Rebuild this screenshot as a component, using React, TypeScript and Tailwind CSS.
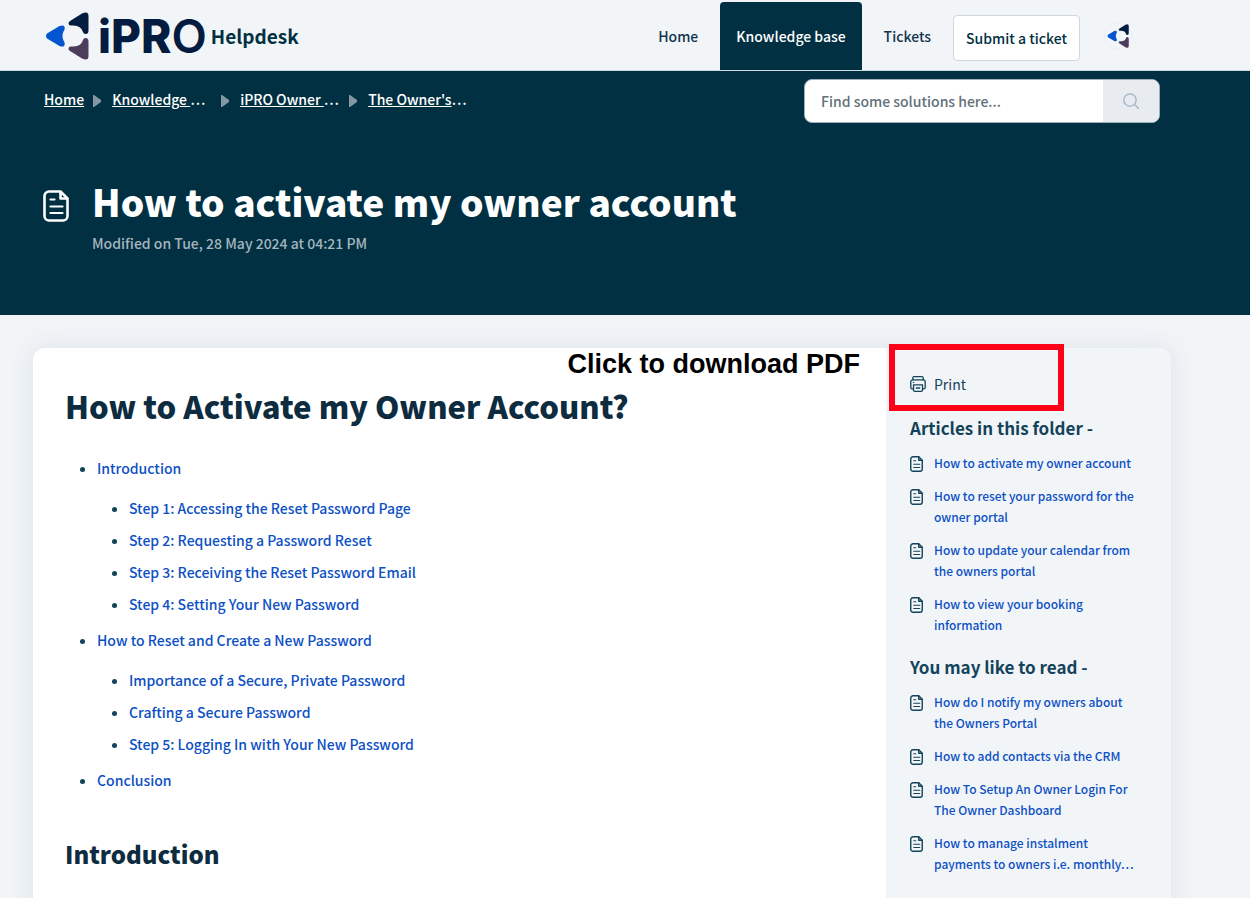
import React from 'react'

type LinkItem = {
    label: string;
    href: string;
};

type TocItem = LinkItem & {
    children?: LinkItem[];
};

const crumbs: LinkItem[] = [
    { label: 'Knowledge ', href: '#solutions' },
    { label: 'iPRO Owner ', href: '#portal' },
    { label: "The Owner's", href: '#dashboard' },
];

const toc: TocItem[] = [
    {
        label: 'Introduction',
        href: '#introduction',
        children: [
            { label: 'Step 1: Accessing the Reset Password Page', href: '#step-1' },
            { label: 'Step 2: Requesting a Password Reset', href: '#step-2' },
            { label: 'Step 3: Receiving the Reset Password Email', href: '#step-3' },
            { label: 'Step 4: Setting Your New Password', href: '#step-4' },
        ],
    },
    {
        label: 'How to Reset and Create a New Password',
        href: '#reset',
        children: [
            { label: 'Importance of a Secure, Private Password', href: '#importance' },
            { label: 'Crafting a Secure Password', href: '#crafting' },
            { label: 'Step 5: Logging In with Your New Password', href: '#step-5' },
        ],
    },
    { label: 'Conclusion', href: '#conclusion' },
];

const folderArticles: LinkItem[] = [
    { label: 'How to activate my owner account', href: '#a1' },
    { label: 'How to reset your password for the owner portal', href: '#a2' },
    { label: 'How to update your calendar from the owners portal', href: '#a3' },
    { label: 'How to view your booking information', href: '#a4' },
];

const relatedArticles: LinkItem[] = [
    { label: 'How do I notify my owners about the Owners Portal', href: '#r1' },
    { label: 'How to add contacts via the CRM', href: '#r2' },
    { label: 'How To Setup An Owner Login For The Owner Dashboard', href: '#r3' },
    { label: 'How to manage instalment payments to owners i.e. monthly…', href: '#r4' },
];

function LogoMark({ className }: { className?: string }) {
    return (
        <svg viewBox="0 0 44 48" className={className} aria-hidden="true">
            <path d="M25 9 37 1.500Q43.500-1.500 43.500 4V18.500Q43.500 22 40.500 22 38.500 22 38 20 36 13.500 28.500 13.500H26Q23.500 13.500 23.500 11.500 23.500 10 25 9Z" fill="#041c3f" />
            <path d="M2 21.500 14.500 14Q20 12 19.700 16.500 19.700 18 18.500 19.500 16.500 24 18.500 28.500 19.700 30 19.700 31.500 20 36 14.500 34L2 26.500Q0 24 2 21.500Z" fill="#0455cf" />
            <path d="M25 39 37 46.500Q43.500 49.500 43.500 44V29.500Q43.500 26 40.500 26 38.500 26 38 28 36 34.500 28.500 34.500H26Q23.500 34.500 23.500 36.500 23.500 38 25 39Z" fill="#4d3d5c" />
        </svg>
    );
}

function DocIcon({ className, strokeWidth }: { className?: string; strokeWidth: number }) {
    return (
        <svg
            viewBox="0 0 26 32"
            className={className}
            fill="none"
            stroke="currentColor"
            strokeWidth={strokeWidth}
            strokeLinecap="round"
            strokeLinejoin="round"
            aria-hidden="true"
        >
            <path d="M6 1.500H17.500L24.500 8.500V26A4.500 4.500 0 0 1 20 30.500H6A4.500 4.500 0 0 1 1.500 26V6A4.500 4.500 0 0 1 6 1.500Z" />
            <path d="M17.500 2V8.500H24" />
            <path d="M7.500 9.500H11.500M7.500 16.500H19.500M7.500 23H19.500" strokeWidth="2.2" />
        </svg>
    );
}

function PrintIcon() {
    return (
        <svg
            viewBox="0 0 16 16"
            className="h-4 w-4 shrink-0"
            fill="none"
            stroke="currentColor"
            strokeWidth="1.3"
            strokeLinejoin="round"
            strokeLinecap="round"
            aria-hidden="true"
        >
            <path d="M2.800 3.800V1.800A1.200 1.200 0 0 1 4 .7H12A1.200 1.200 0 0 1 13.200 1.800V3.800" />
            <path d="M3.200 12.800H2.200A1.400 1.400 0 0 1 .8 11.400V5.800A2 2 0 0 1 2.800 3.800H13.200A2 2 0 0 1 15.200 5.800V11.400A1.400 1.400 0 0 1 13.800 12.800H12.800" />
            <path d="M3.500 8.800H12.500V14A1.200 1.200 0 0 1 11.300 15.300H4.700A1.200 1.200 0 0 1 3.500 14Z" />
            <path d="M6.300 12H9.700M3.400 6.400H3.600" />
        </svg>
    );
}

function Header() {
    return (
        <header className="border-b border-[#cfd7df] bg-[#f2f5f8]">
            <div className="flex h-[70px] max-w-[1204px] items-center justify-between pt-0.5 pr-[72px] pl-11">
                <a href="#home" className="flex items-center text-[#003042]">
                    <LogoMark className="h-12 w-[46px]" />
                    <span className="ml-2 flex font-[Inter] text-[46px] leading-[48px] text-[#041c3f]">
                        <span className="font-extrabold">iPR</span>
                        <span className="font-semibold">O</span>
                    </span>
                    <span className="ml-1 text-[19px] font-bold">Helpdesk</span>
                </a>
                <nav className="flex h-full items-center text-sm font-medium text-[#12344d]">
                    <a href="#home" className="px-[22px]">Home</a>
                    <a
                        href="#solutions"
                        className="flex h-[68px] items-center rounded-t bg-[#003042] px-4 text-white"
                    >
                        Knowledge base
                    </a>
                    <a href="#tickets" className="px-[22px]">Tickets</a>
                    <a
                        href="#new-ticket"
                        className="mt-1 flex h-[46px] items-center rounded border border-[#cfd7df] bg-white px-3 text-[#003042]"
                    >
                        Submit a ticket
                    </a>
                    <button
                        type="button"
                        aria-label="Profile"
                        className="ml-6 flex h-7 w-7 items-center justify-center rounded-full border border-[#ebeff3]"
                    >
                        <LogoMark className="h-6 w-[22px]" />
                    </button>
                </nav>
            </div>
        </header>
    );
}

function CrumbArrow() {
    return (
        <svg viewBox="0 0 8 12" className="mt-1 mr-[11px] h-3 w-2" aria-hidden="true">
            <path d="M0 0H1L8 5V7L1 12H0Z" fill="#8597a2" />
        </svg>
    );
}

function Hero() {
    return (
        <section className="bg-[#003042] pt-2 pb-[60px] text-white">
            <div className="max-w-[1204px] px-11">
                <div className="flex items-start justify-between">
                    <nav aria-label="Breadcrumb" className="pt-2">
                        <ol className="flex text-sm leading-6 font-medium">
                            <li>
                                <a href="#home" className="mr-[9px] underline">Home</a>
                            </li>
                            {crumbs.map((crumb) => (
                                <li key={crumb.href} className="flex items-center">
                                    <CrumbArrow />
                                    <a href={crumb.href} className="mr-[9px] w-[100px] whitespace-pre">
                                        <span className="underline">{crumb.label}</span>…
                                    </a>
                                </li>
                            ))}
                        </ol>
                    </nav>
                    <form className="flex h-11 w-[356px] overflow-hidden rounded-lg border border-[#9fb0bd] bg-white">
                        <input
                            type="text"
                            aria-label="Search solutions"
                            placeholder="Find some solutions here..."
                            className="min-w-0 flex-1 px-4 text-sm font-medium text-[#12344d] placeholder:text-[#647078]"
                        />
                        <button
                            type="button"
                            aria-label="Search"
                            className="flex w-14 items-center justify-center bg-[#e8ecf0] text-[#9fb3c1]"
                        >
                            <svg viewBox="0 0 16 16" className="h-4 w-4" fill="none" stroke="currentColor" strokeWidth="1.3" strokeLinecap="round">
                                <circle cx="7" cy="7" r="6.200" />
                                <path d="M11.500 11.500 15.300 15.300" />
                            </svg>
                        </button>
                    </form>
                </div>
                <div className="mt-[51px] flex">
                    <DocIcon className="mt-4 -ml-px h-8 w-[26px] shrink-0" strokeWidth={2.6} />
                    <div className="ml-[23px]">
                        <h1 className="text-[37px] leading-[54px] font-black">How to activate my owner account</h1>
                        <p className="mt-[3px] text-sm leading-6 font-medium text-[#a6b5bd]">Modified on Tue, 28 May 2024 at 04:21 PM</p>
                    </div>
                </div>
            </div>
        </section>
    );
}

function ArticleLinks({ title, items }: { title: string; items: LinkItem[] }) {
    return (
        <section className="mt-[18px]">
            <h2 className="text-[17px] leading-7 font-bold text-[#12435a]">{title}</h2>
            <ul className="mt-2.5 space-y-3">
                {items.map((item) => (
                    <li key={item.href} className="flex">
                        <DocIcon className="mt-1 mr-[11px] h-4 w-[13px] shrink-0 text-[#12435a]" strokeWidth={2.8} />
                        <a href={item.href} className="text-xs leading-[21px] font-medium text-[#0d50c4]">{item.label}</a>
                    </li>
                ))}
            </ul>
        </section>
    );
}

export default function App() {
    return (
        <div className="h-screen overflow-hidden bg-[#f2f5f8] font-['Noto_Sans_CJK_SC',sans-serif] text-[#12344d]">
            <Header />
            <Hero />
            <main className="max-w-[1204px] px-[33px] pt-[33px]">
                <div className="relative flex rounded-xl shadow-[0_0_24px_4px_rgba(18,52,77,0.07)]">
                    <article className="min-w-0 flex-1 rounded-l-xl bg-white px-8 pt-[38px] pb-16">
                        <h2 className="text-[31px] leading-10 font-black text-[#0d2c3f]">How to Activate my Owner Account?</h2>
                        <ul className="mt-[26px] list-disc pl-8 text-sm leading-8 font-medium text-[#12435a]">
                            {toc.map((item) => (
                                <li key={item.href} className="mb-1">
                                    <a href={item.href} className="text-[#0d50c4]">{item.label}</a>
                                    {item.children && (
                                        <ul className="mt-2 list-disc pl-8">
                                            {item.children.map((child) => (
                                                <li key={child.href}>
                                                    <a href={child.href} className="text-[#0d50c4]">{child.label}</a>
                                                </li>
                                            ))}
                                        </ul>
                                    )}
                                </li>
                            ))}
                        </ul>
                        <h3 id="introduction" className="mt-[42px] text-2xl leading-8 font-black text-[#0d2c3f]">Introduction</h3>
                    </article>
                    <aside className="w-[285px] shrink-0 rounded-r-xl bg-[#f2f5f8] pt-6 pr-8 pl-6">
                        <button type="button" className="flex items-center gap-2 text-sm leading-6 text-[#12435a]">
                            <PrintIcon />
                            Print
                        </button>
                        <ArticleLinks title="Articles in this folder -" items={folderArticles} />
                        <ArticleLinks title="You may like to read -" items={relatedArticles} />
                    </aside>
                    {/* callout pointing at the print button */}
                    <div className="absolute -top-1 right-[107px] h-[67px] w-[175px] border-6 border-[#ff0019]" />
                    <p className="absolute top-0 right-[311px] font-['Liberation_Sans',sans-serif] text-[27px] leading-8 font-bold text-black">
                        Click to download PDF
                    </p>
                </div>
            </main>
        </div>
    );
}
